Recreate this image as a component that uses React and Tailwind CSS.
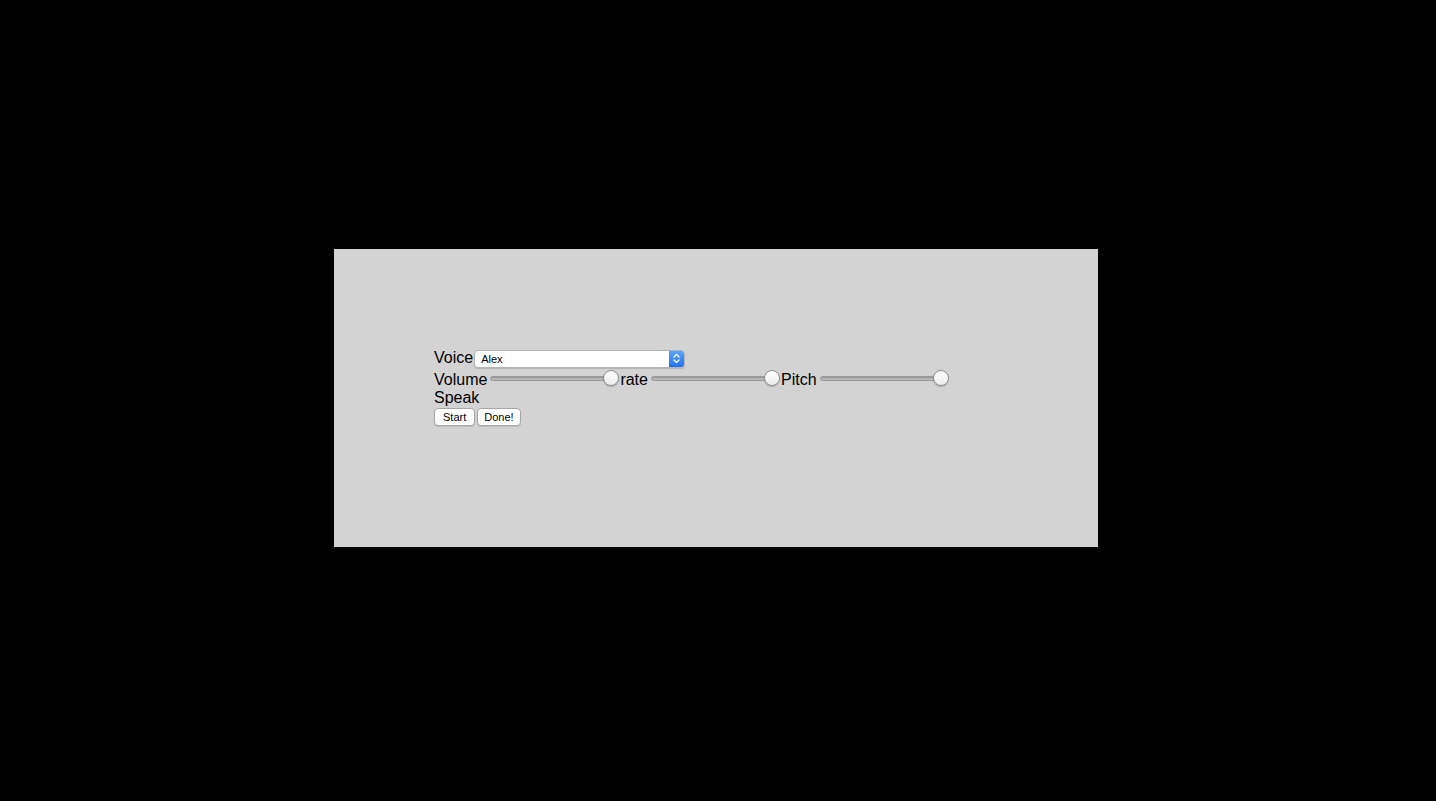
const Slider = ({ w = 129 }) => (
  <div className="relative h-[18px] ml-[3px] mr-[1px]" style={{ width: w }}>
    <div className="absolute left-0 right-[2px] top-[6px] h-[5px] rounded-[3px] bg-[#b9b9b9] border border-[#9a9a9a] shadow-[inset_0_1px_1px_rgba(0,0,0,0.2)]" />
    <div className="absolute right-0 top-0 w-[16px] h-[16px] rounded-full bg-gradient-to-b from-white to-[#ececec] border border-[#8f8f8f] shadow-[0_1px_1px_rgba(0,0,0,0.2)]" />
  </div>
);

export default function App() {
  return (
    <div className="bg-black h-[801px] w-[1436px] pt-[249px] pl-[334px] font-['Liberation_Sans',Arial,sans-serif] text-black">
      <div className="w-[764px] h-[298px] bg-[#d3d3d3] pl-[100px] pt-[100px]">
        <div className="flex items-center h-[19px] text-[16px] leading-[17px]">
          <span className="-mt-[2px]">Voice</span>
          <div className="ml-[1px] w-[211px] h-[18px] bg-white rounded-[4px] border border-[#b5b5b5] flex items-center shadow-[0_1px_1px_rgba(0,0,0,0.15)] overflow-hidden">
            <span className="flex-1 pl-[6px] text-[11px] leading-[16px]">Alex</span>
            <div className="w-[15px] h-full bg-gradient-to-b from-[#5aa2fb] to-[#1a73f0] flex items-center justify-center">
              <svg width="7" height="11" viewBox="0 0 7 11" fill="none" stroke="white" strokeWidth="1.4" strokeLinecap="round" strokeLinejoin="round">
                <path d="M1 4 L3.5 1.5 L6 4" />
                <path d="M1 7 L3.5 9.5 L6 7" />
              </svg>
            </div>
          </div>
        </div>
        <div className="flex items-center h-[20px] mt-[1px] text-[16px] leading-[19px]">
          <span>Volume</span>
          <Slider />
          <span>rate</span>
          <Slider />
          <span>Pitch</span>
          <Slider />
        </div>
        <div className="text-[16px] leading-[18px] h-[18px]">Speak</div>
        <div className="flex gap-[2px] mt-[1px]">
          <button className="h-[18px] px-[8px] bg-white border border-[#a6a6a6] rounded-[4px] text-[11px] leading-[16px] shadow-[0_1px_1px_rgba(0,0,0,0.1)]">Start</button>
          <button className="h-[18px] px-[6px] bg-white border border-[#a6a6a6] rounded-[4px] text-[11px] leading-[16px] shadow-[0_1px_1px_rgba(0,0,0,0.1)]">Done!</button>
        </div>
      </div>
    </div>
  );
}
